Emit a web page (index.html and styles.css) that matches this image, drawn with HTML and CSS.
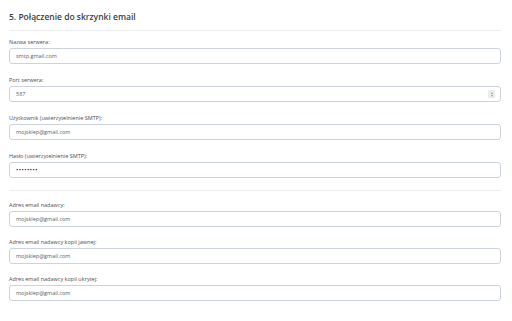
FILE: index.html
```html
<!DOCTYPE html>
<html lang="pl">
<head>
  <meta charset="UTF-8" />
  <meta name="viewport" content="width=device-width, initial-scale=1.0" />
  <title>Połączenie do skrzynki email</title>
  <link rel="stylesheet" href="styles.css">
</head>
<body>

<section class="panel">
  <h2 class="panel-title">5. Połączenie do skrzynki email</h2>

  <div class="group">
    <div class="field">
      <label for="host">Nazwa serwera:</label>
      <input id="host" type="text" value="smtp.gmail.com">
    </div>
    <div class="field">
      <label for="port">Port serwera:</label>
      <div class="number-wrap">
        <input id="port" type="text" value="587">
        <span class="spinner"><i class="up"></i><i class="down"></i></span>
      </div>
    </div>
    <div class="field">
      <label for="user">Użytkownik (uwierzytelnienie SMTP):</label>
      <input id="user" type="text" value="mojsklep@gmail.com">
    </div>
    <div class="field">
      <label for="pass">Hasło (uwierzytelnienie SMTP):</label>
      <input id="pass" type="password" value="12345678" class="pass">
    </div>
  </div>

  <div class="group">
    <div class="field">
      <label for="from">Adres email nadawcy:</label>
      <input id="from" type="text" value="mojsklep@gmail.com">
    </div>
    <div class="field">
      <label for="cc">Adres email nadawcy kopii jawnej:</label>
      <input id="cc" type="text" value="mojsklep@gmail.com">
    </div>
    <div class="field">
      <label for="bcc">Adres email nadawcy kopii ukrytej:</label>
      <input id="bcc" type="text" value="mojsklep@gmail.com">
    </div>
  </div>
</section>

</body>
</html>
```

FILE: styles.css
```css
body {
  margin: 0;
  background-color: #fff;
  font-family: "Open Sans", "Liberation Sans", sans-serif;
  color: #444;
}
.panel {
  padding: 0 11px 0 9px;
}
.panel-title {
  margin: 0;
  padding: 12px 0 9px;
  font-size: 8.5px;
  font-weight: 600;
  line-height: 9px;
  color: #3a3f45;
  border-bottom: 1px solid #ebedf0;
}
.group {
  padding: 7px 0 0;
}
.group + .group {
  border-top: 1px solid #ebedf0;
  margin-top: 4px;
  padding-top: 10px;
}
.field {
  display: flex;
  flex-direction: column;
  gap: 2px;
  margin-bottom: 12px;
}
.group + .group .field {
  margin-bottom: 11px;
}
label {
  font-size: 5.5px;
  line-height: 8px;
  color: #4a4f55;
}
input {
  display: block;
  box-sizing: border-box;
  width: 100%;
  height: 16px;
  margin: 0;
  padding: 0 6px;
  border: 1px solid #cdd3dc;
  border-radius: 3px;
  font-family: inherit;
  font-size: 5.5px;
  color: #5a5f66;
  background: #fff;
  outline: none;
}
.pass {
  font-size: 6px;
  color: #111;
  letter-spacing: 0.5px;
}
.number-wrap {
  position: relative;
}
.spinner {
  position: absolute;
  right: 6px;
  top: 4px;
  width: 7px;
  height: 8px;
  background: #ececee;
  display: flex;
  flex-direction: column;
  align-items: center;
  justify-content: center;
  gap: 1px;
}
.spinner i {
  width: 0;
  height: 0;
  border-left: 1.5px solid transparent;
  border-right: 1.5px solid transparent;
}
.spinner .up {
  border-bottom: 2px solid #9a9ca0;
}
.spinner .down {
  border-top: 2px solid #9a9ca0;
}
```
